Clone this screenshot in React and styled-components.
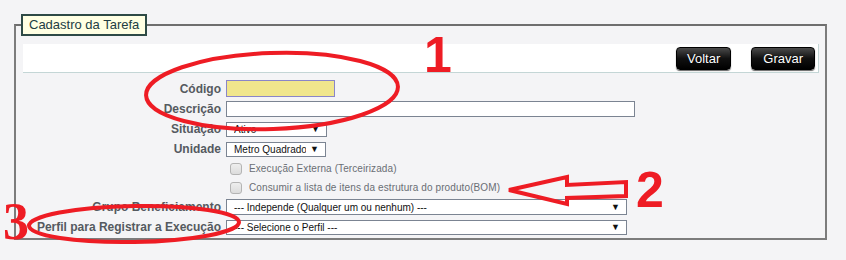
import React from 'react';
import styled, { createGlobalStyle } from 'styled-components';

const GlobalStyle = createGlobalStyle`
  html, body {
    margin: 0;
    padding: 0;
    background: #f4f4f6;
    font-family: "Liberation Sans", Arial, sans-serif;
  }
`;

const Page = styled.div`
  position: relative;
  width: 846px;
  height: 260px;
  overflow: hidden;
  padding: 14px 0 0 14px;
  box-sizing: border-box;
`;

const Frame = styled.fieldset`
  width: 813px;
  box-sizing: border-box;
  margin: 0;
  padding: 8px 6px 1px 7px;
  border: 2px solid #7c7c7c;
  border-top-color: #6e6e6e;
  border-radius: 0;
`;

const Legend = styled.legend`
  margin-left: -2px;
  padding: 0 6px;
  height: 22px;
  box-sizing: border-box;
  border: 2px solid #2e4a46;
  background: #ffffe3;
  color: #223c44;
  font-size: 13px;
  line-height: 18px;
`;

const Toolbar = styled.div`
  display: flex;
  justify-content: flex-end;
  align-items: center;
  gap: 20px;
  height: 28px;
  padding-right: 3px;
  background: #fff;
  border-bottom: 1px solid #c4d6d6;
  border-right: 1px solid #c4d6d6;
  margin-bottom: 5px;
`;

const Button = styled.button`
  height: 23px;
  padding: 0 ${p => p.$pad}px;
  border: 1px solid #000;
  border-radius: 4px;
  background: linear-gradient(#4a4a4a, #111 50%, #000);
  color: #fff;
  font-family: "Liberation Sans", Arial, sans-serif;
  font-size: 13px;
  text-shadow: 0 0 1px #000;
  box-shadow: 0 1px 1px #666;
`;

const Row = styled.div`
  display: grid;
  grid-template-columns: 198px 1fr;
  column-gap: 5px;
  align-items: center;
  height: ${p => p.$h || 20}px;
`;

const Label = styled.label`
  text-align: right;
  font-size: 12px;
  font-weight: bold;
  color: #555a60;
  white-space: nowrap;
`;

const TextInput = styled.div`
  width: ${p => p.$w}px;
  height: ${p => p.$h || 16}px;
  box-sizing: border-box;
  background: ${p => (p.$focus ? '#f0e68c' : '#fff')};
  border: 1px solid ${p => (p.$focus ? '#8a86c8' : '#7b8492')};
`;

const Select = styled.div`
  display: flex;
  align-items: center;
  justify-content: space-between;
  width: ${p => p.$w}px;
  height: ${p => p.$h || 15}px;
  box-sizing: border-box;
  padding: 0 6px 0 7px;
  background: #fff;
  border: 1px solid #7b8492;
  font-size: 10px;
  color: #111;
  overflow: hidden;
`;

const SelectText = styled.span`
  white-space: nowrap;
  overflow: hidden;
  flex: 1;
`;

const Arrow = styled.span`
  font-size: 9px;
  margin-left: 4px;
`;

const Check = styled.div`
  display: flex;
  align-items: center;
  gap: 7px;
  padding-left: 4px;
  font-size: 10px;
  letter-spacing: 0.1px;
  color: #6a6e74;
`;

const Box = styled.span`
  width: 12px;
  height: 12px;
  box-sizing: border-box;
  border: 1px solid #b4b4b4;
  border-radius: 3px;
  background: linear-gradient(#eee, #dcdcdc);
`;

const Overlay = styled.svg`
  position: absolute;
  left: 0;
  top: 0;
  pointer-events: none;
`;

const Digit = styled.span`
  position: absolute;
  left: ${p => p.$x}px;
  top: ${p => p.$y}px;
  color: #ee1c24;
  font-family: ${p => (p.$sans ? '"Liberation Sans", Arial, sans-serif' : '"Liberation Serif", "Times New Roman", serif')};
  font-weight: bold;
  font-size: ${p => p.$size}px;
  line-height: 1;
`;

export default function App() {
  return (
    <>
      <GlobalStyle />
      <Page>
        <Frame>
          <Legend>Cadastro da Tarefa</Legend>
          <Toolbar>
            <Button $pad={10}>Voltar</Button>
            <Button $pad={11}>Gravar</Button>
          </Toolbar>
          <Row $h={21}>
            <Label>Código</Label>
            <TextInput $w={109} $h={17} $focus />
          </Row>
          <Row>
            <Label>Descrição</Label>
            <TextInput $w={409} />
          </Row>
          <Row>
            <Label>Situação</Label>
            <Select $w={101}>
              <SelectText>Ativo</SelectText>
              <Arrow>▼</Arrow>
            </Select>
          </Row>
          <Row>
            <Label>Unidade</Label>
            <Select $w={100}>
              <SelectText>Metro Quadrado</SelectText>
              <Arrow>▼</Arrow>
            </Select>
          </Row>
          <Row $h={19}>
            <span />
            <Check><Box />Execução Externa (Terceirizada)</Check>
          </Row>
          <Row $h={19}>
            <span />
            <Check><Box />Consumir a lista de itens da estrutura do produto(BOM)</Check>
          </Row>
          <Row>
            <Label>Grupo Beneficiamento</Label>
            <Select $w={401} $h={16}>
              <SelectText>--- Independe (Qualquer um ou nenhum) ---</SelectText>
              <Arrow>▼</Arrow>
            </Select>
          </Row>
          <Row>
            <Label>Perfil para Registrar a Execução</Label>
            <Select $w={401}>
              <SelectText>--- Selecione o Perfil ---</SelectText>
              <Arrow>▼</Arrow>
            </Select>
          </Row>
        </Frame>

        <Overlay width="846" height="260" viewBox="0 0 846 260">
          <g fill="none" stroke="#ee1c24" strokeWidth="4">
            <ellipse cx="272" cy="91" rx="126" ry="38" transform="rotate(-2 272 91)" />
            <polygon points="509,190 567,177 567,185 626,182 626,196 567,198 567,204" strokeLinejoin="miter" />
            <ellipse cx="134" cy="224" rx="105" ry="18" transform="rotate(-1 134 224)" />
          </g>
        </Overlay>
        <Digit $x={424} $y={30} $size={50} $sans>1</Digit>
        <Digit $x={636} $y={165} $size={50} $sans>2</Digit>
        <Digit $x={3} $y={196} $size={52}>3</Digit>
      </Page>
    </>
  );
}
